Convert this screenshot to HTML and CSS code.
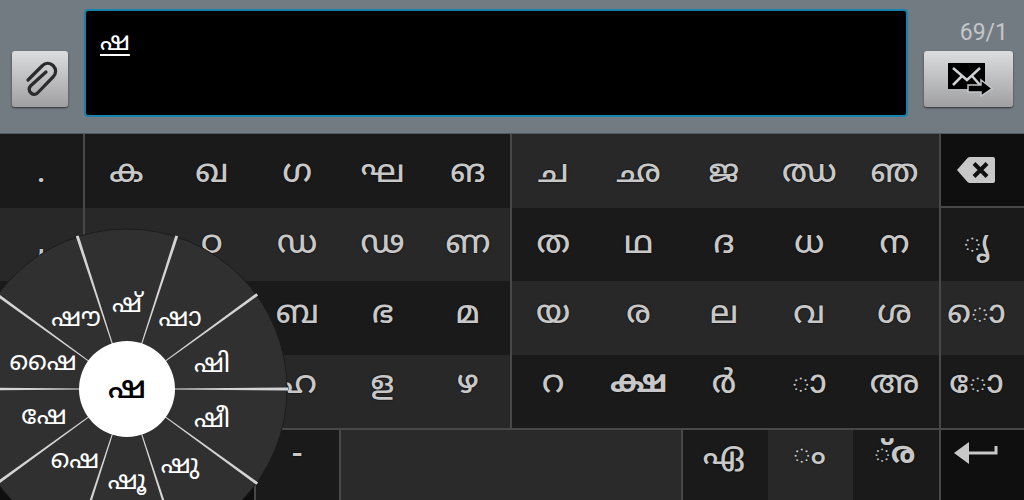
FILE: index.html
```
<!DOCTYPE html>
<html lang="ml">
<head>
    <title>Malayalam Keyboard</title>
    <meta charset="UTF-8">
    <meta name="viewport" content="width=device-width, initial-scale=1">
    <link rel="stylesheet" href="styles.css">
</head>
<body>
    <div class="compose">
        <button class="btn attach" type="button" aria-label="Attach">
            <svg width="34" height="38" viewBox="0 0 34 38" fill="none" stroke="#2b2b2b" stroke-width="3.200" stroke-linecap="round" stroke-linejoin="round">
                <path d="M3 20L17 6C20.500 2.500 25 2.500 28 5.500C31.500 9 31.500 13.500 28 17L13 32.500C11 35 8 35 6 33C3.500 30.500 3.500 28 6 25.500L21 12"/>
            </svg>
        </button>
        <textarea class="message" aria-label="Message" spellcheck="false">ഷ</textarea>
        <div class="side">
            <div class="counter">69/1</div>
            <button class="btn send" type="button" aria-label="Send">
                <svg width="46" height="36" viewBox="0 0 46 36">
                    <path d="M1 2H38V28H1Z" fill="#000"/>
                    <path d="M6 7L20 19L33 7M6 24L15 15M25 15L33 24" fill="none" stroke="#d0d1d3" stroke-width="2.500"/>
                    <path d="M21 24H34V19L45 27.500L34 35V31H21Z" fill="#000" stroke="#c4c5c7" stroke-width="1.500"/>
                </svg>
            </button>
        </div>
    </div>

    <div class="keyboard">
        <div class="row row-1">
            <button class="key dark line-right">.</button>
            <button class="key dark">ക</button>
            <button class="key dark">ഖ</button>
            <button class="key dark">ഗ</button>
            <button class="key dark">ഘ</button>
            <button class="key dark line-right">ങ</button>
            <button class="key">ച</button>
            <button class="key">ഛ</button>
            <button class="key">ജ</button>
            <button class="key">ഝ</button>
            <button class="key">ഞ</button>
            <button class="key black line-left line-bottom" aria-label="Backspace">
                <svg width="40" height="28" viewBox="0 0 40 28">
                    <path d="M1 14L11.500 2Q12.500 1 14 1H37Q39 1 39 3V25Q39 27 37 27H14Q12.500 27 11.500 26Z" fill="#c8c8c8"/>
                    <path d="M18 7.500L31 20.500M31 7.500L18 20.500" stroke="#101010" stroke-width="4"/>
                </svg>
            </button>
        </div>
        <div class="row row-2">
            <button class="key line-right">,</button>
            <button class="key">ട</button>
            <button class="key">ഠ</button>
            <button class="key">ഡ</button>
            <button class="key">ഢ</button>
            <button class="key line-right">ണ</button>
            <button class="key dark">ത</button>
            <button class="key dark">ഥ</button>
            <button class="key dark">ദ</button>
            <button class="key dark">ധ</button>
            <button class="key dark">ന</button>
            <button class="key dark line-left">◌ൃ</button>
        </div>
        <div class="row row-3">
            <button class="key dark line-right">?</button>
            <button class="key dark">പ</button>
            <button class="key dark">ഫ</button>
            <button class="key dark">ബ</button>
            <button class="key dark">ഭ</button>
            <button class="key dark line-right">മ</button>
            <button class="key">യ</button>
            <button class="key">ര</button>
            <button class="key">ല</button>
            <button class="key">വ</button>
            <button class="key">ശ</button>
            <button class="key line-left">◌ൊ</button>
        </div>
        <div class="row row-4">
            <button class="key line-right">!</button>
            <button class="key">ഷ</button>
            <button class="key">സ</button>
            <button class="key">ഹ</button>
            <button class="key">ള</button>
            <button class="key line-right">ഴ</button>
            <button class="key dark">റ</button>
            <button class="key dark strong">ക്ഷ</button>
            <button class="key dark">ർ</button>
            <button class="key dark">◌ാ</button>
            <button class="key dark">അ</button>
            <button class="key dark line-left">◌ോ</button>
        </div>
        <div class="row row-5">
            <button class="key black wide-3 line-right" aria-label="Symbols"></button>
            <button class="key dark line-right">-</button>
            <button class="key space line-right" aria-label="Space"></button>
            <button class="key dark">ഏ</button>
            <button class="key">◌ം</button>
            <button class="key dark strong">◌്&zwnj;ര</button>
            <button class="key black line-left" aria-label="Enter">
                <svg width="44" height="24" viewBox="0 0 44 24">
                    <path d="M0 12L15 1V23Z" fill="#c8c8c8"/>
                    <path d="M14 12H42V5" fill="none" stroke="#c8c8c8" stroke-width="3"/>
                </svg>
            </button>
        </div>

        <!-- vowel sign wheel, opened over the held key -->
        <div class="wheel">
            <svg class="spokes" width="322" height="322" viewBox="-161 -161 322 322">
                <defs>
                    <path id="spoke" d="M46 -0.500L161 -1.500V1.500L46 0.500Z"/>
                </defs>
                <circle r="160" fill="#303030" stroke="#1c1c1c"/>
                <g fill="#d4d4d4">
                    <use href="#spoke"/>
                    <use href="#spoke" transform="rotate(36)"/>
                    <use href="#spoke" transform="rotate(72)"/>
                    <use href="#spoke" transform="rotate(108)"/>
                    <use href="#spoke" transform="rotate(144)"/>
                    <use href="#spoke" transform="rotate(180)"/>
                    <use href="#spoke" transform="rotate(216)"/>
                    <use href="#spoke" transform="rotate(252)"/>
                    <use href="#spoke" transform="rotate(288)"/>
                    <use href="#spoke" transform="rotate(324)"/>
                </g>
            </svg>
            <button class="center">ഷ</button>
            <button class="sign s0">ഷ്</button>
            <button class="sign s1">ഷാ</button>
            <button class="sign s2">ഷി</button>
            <button class="sign s3">ഷീ</button>
            <button class="sign s4">ഷു</button>
            <button class="sign s5">ഷൂ</button>
            <button class="sign s6">ഷെ</button>
            <button class="sign s7">ഷേ</button>
            <button class="sign s8">ഷൈ</button>
            <button class="sign s9">ഷൗ</button>
        </div>
    </div>
</body>
</html>
```

FILE: styles.css
```
* {
    box-sizing: border-box;
}
body {
    margin: 0;
    height: 100vh;
    display: flex;
    flex-direction: column;
    overflow: hidden;
    background-color: #111;
    font-family: Roboto, "Noto Sans Malayalam", "Noto Sans", sans-serif;
}
button {
    margin: 0;
    padding: 0;
    border: 0;
    font-family: inherit;
}
.compose {
    display: flex;
    align-items: flex-end;
    gap: 16px;
    padding: 9px 11px 16px 12px;
    background-color: #737b82;
    border-bottom: 1px solid #555a5e;
}
.btn {
    display: flex;
    align-items: center;
    justify-content: center;
    height: 56px;
    margin-bottom: 10px;
    padding-left: 3px;
    border-radius: 3px;
    background: linear-gradient(#dcdddf, #a0a0a2);
    box-shadow: 0 1px 2px rgba(0,0,0,0.6);
}
.attach {
    width: 56px;
}
.message {
    flex: 1;
    height: 108px;
    padding: 14px;
    border: 2px solid #1583ac;
    border-radius: 4px;
    outline: 0;
    resize: none;
    background-color: #000;
    color: #fff;
    font-family: inherit;
    font-size: 26px;
    line-height: 32px;
    text-decoration: underline;
    text-decoration-thickness: 2px;
    text-underline-offset: 4px;
}
.side {
    width: 89px;
}
.counter {
    padding-right: 5px;
    margin-bottom: 4px;
    text-align: right;
    font-size: 23px;
    line-height: 28px;
    color: #c4c6c8;
}
.send {
    width: 100%;
}
.keyboard {
    position: relative;
    flex: 1;
    min-height: 0;
    overflow: hidden;
    display: grid;
    grid-template-rows: repeat(4, 1fr) 72px;
}
.row {
    display: grid;
    grid-template-columns: repeat(12, 1fr);
}
.key {
    display: flex;
    align-items: center;
    justify-content: center;
    min-width: 0;
    padding-right: 3px;
    background-color: #282828;
    color: #c8c8c8;
    font-size: 32px;
    font-weight: 500;
    line-height: 40px;
    text-shadow: 0 0 2px #000;
}
.dark {
    background-color: #1a1a1a;
}
.black {
    background-color: #0f0f0f;
}
.strong {
    font-weight: bold;
    font-size: 30px;
}
.line-right {
    padding-right: 1px;
    border-right: 2px solid #484848;
}
.line-left {
    padding-right: 12px;
    border-left: 2px solid #484848;
}
.line-bottom {
    border-bottom: 2px solid #484848;
}
.row-2 .key {
    padding-bottom: 4px;
}
.row-3 .key {
    padding-bottom: 12px;
}
.row-4 .key {
    padding-bottom: 18px;
}
.row-5 {
    border-top: 2px solid #484848;
}
.row-5 .key {
    padding-bottom: 24px;
}
.wide-3 {
    grid-column: span 3;
}
.space {
    grid-column: span 4;
    background-color: #2a2a2a;
}
.wheel {
    position: absolute;
    left: -34px;
    top: 94px;
    width: 322px;
    height: 322px;
}
.spokes {
    display: block;
}
.center {
    position: absolute;
    left: 113px;
    top: 113px;
    width: 96px;
    height: 96px;
    border-radius: 50%;
    background-color: #fff;
    color: #000;
    font-size: 32px;
    font-weight: 500;
}
.sign {
    position: absolute;
    transform: translate(-50%, -50%);
    background: none;
    color: #fff;
    font-size: 26px;
    line-height: 32px;
}
.s0 { left: 161px; top: 75px; }
.s1 { left: 214px; top: 89px; }
.s2 { left: 246px; top: 135px; }
.s3 { left: 246px; top: 190px; }
.s4 { left: 214px; top: 236px; }
.s5 { left: 161px; top: 252px; }
.s6 { left: 109px; top: 231px; }
.s7 { left: 78px; top: 187px; }
.s8 { left: 77px; top: 133px; }
.s9 { left: 110px; top: 89px; }
```
